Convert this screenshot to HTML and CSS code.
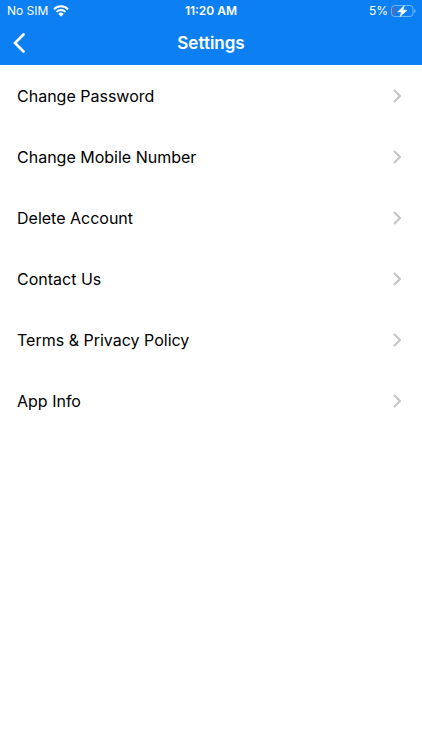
FILE: index.html
```html
<!DOCTYPE html>
<html lang="en">
<head>
<meta charset="utf-8">
<meta name="viewport" content="width=device-width, initial-scale=1">
<title>Settings</title>
<link rel="stylesheet" href="styles.css">
</head>
<body>
<header class="header">
  <div class="status">
    <div class="status-left">
      <span>No SIM</span>
      <svg class="wifi" viewBox="0 0 16 12" aria-hidden="true">
        <path d="M1 4.200a10 10 0 0 1 14 0M3.500 6.900a6.400 6.400 0 0 1 9 0" fill="none" stroke="currentColor" stroke-width="2"/>
        <path d="M5.300 8.900a3.800 3.800 0 0 1 5.400 0L8 11.700z" fill="currentColor"/>
      </svg>
    </div>
    <time class="clock">11:20 AM</time>
    <div class="status-right">
      <span>5%</span>
      <svg class="battery" viewBox="0 0 25 12" aria-hidden="true">
        <rect x=".5" y=".5" width="21.500" height="11" rx="3" fill="none" stroke="currentColor" stroke-opacity=".4"/>
        <path d="M23.300 4v4c1.600-.6 1.600-3.400 0-4z" fill="currentColor" fill-opacity=".5"/>
        <path d="M3.500 2v8C2.200 10 2 9.300 2 8.500v-5C2 2.700 2.200 2 3.500 2z" fill="#a5587f"/>
        <path d="M13.300.6 6.700 6.900h3.900L9 11.600l7-6.400h-4.100z" fill="currentColor" stroke="currentColor" stroke-width=".6" stroke-linejoin="round"/>
      </svg>
    </div>
  </div>
  <nav class="navbar">
    <button class="back" type="button" aria-label="Back">
      <svg viewBox="0 0 12 20" aria-hidden="true"><path d="M10.500 1.500 2 10l8.500 8.500" fill="none" stroke="currentColor" stroke-width="2.600" stroke-linecap="round" stroke-linejoin="miter"/></svg>
    </button>
    <h1 class="title">Settings</h1>
  </nav>
</header>
<main>
  <ul class="list">
    <li><a class="row" href="#password">Change Password<svg class="chevron" viewBox="0 0 8 14" aria-hidden="true"><path d="m1 1 6 6-6 6"/></svg></a></li>
    <li><a class="row" href="#mobile">Change Mobile Number<svg class="chevron" viewBox="0 0 8 14" aria-hidden="true"><path d="m1 1 6 6-6 6"/></svg></a></li>
    <li><a class="row" href="#delete">Delete Account<svg class="chevron" viewBox="0 0 8 14" aria-hidden="true"><path d="m1 1 6 6-6 6"/></svg></a></li>
    <li><a class="row" href="#contact">Contact Us<svg class="chevron" viewBox="0 0 8 14" aria-hidden="true"><path d="m1 1 6 6-6 6"/></svg></a></li>
    <li><a class="row" href="#terms">Terms &amp; Privacy Policy<svg class="chevron" viewBox="0 0 8 14" aria-hidden="true"><path d="m1 1 6 6-6 6"/></svg></a></li>
    <li><a class="row" href="#info">App Info<svg class="chevron" viewBox="0 0 8 14" aria-hidden="true"><path d="m1 1 6 6-6 6"/></svg></a></li>
  </ul>
</main>
</body>
</html>
```

FILE: styles.css
```css
* {
  box-sizing: border-box;
}

body {
  margin: 0;
  background: #fff;
  color: #000;
  font-family: Inter, "Liberation Sans", sans-serif;
}

.header {
  background: #0c80f2;
  color: #fff;
}

.status {
  display: grid;
  grid-template-columns: 1fr auto 1fr;
  align-items: center;
  height: 21px;
  padding: 0 6px;
  font-size: 12px;
}

.status-left,
.status-right {
  display: flex;
  align-items: center;
  gap: 5px;
}

.status-left {
  padding-left: 1px;
}

.status-right {
  justify-content: flex-end;
  gap: 3px;
}

.clock {
  font-weight: 600;
}

.wifi {
  width: 16px;
  height: 12px;
}

.battery {
  width: 25px;
  height: 12px;
}

.navbar {
  display: grid;
  grid-template-columns: 44px 1fr 44px;
  align-items: center;
  height: 44px;
}

.back {
  display: flex;
  align-items: center;
  height: 44px;
  padding: 0 0 0 13px;
  border: 0;
  background: none;
  color: inherit;
}

.back svg {
  width: 12px;
  height: 20px;
}

.title {
  margin: 0;
  font-size: 17px;
  font-weight: 600;
  text-align: center;
}

.list {
  margin: 0;
  padding: 0;
  list-style: none;
}

.row {
  display: flex;
  align-items: center;
  justify-content: space-between;
  height: 61px;
  padding: 0 21px 0 17px;
  color: inherit;
  font-size: 16px;
  text-decoration: none;
}

.chevron {
  width: 8px;
  height: 14px;
  fill: none;
  stroke: #c4c4c6;
  stroke-width: 2;
}
```
